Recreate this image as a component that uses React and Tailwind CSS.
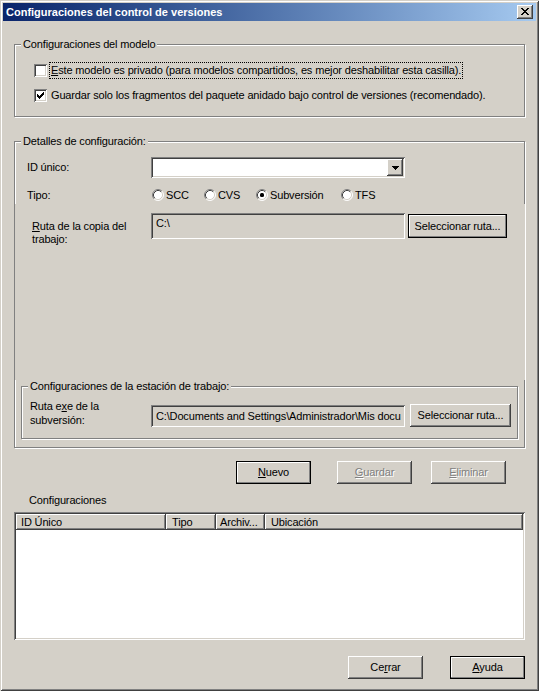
import React from "react";

const RAISED =
  "shadow-[inset_-1px_-1px_0_#404040,inset_1px_1px_0_#ffffff,inset_-2px_-2px_0_#808080,inset_2px_2px_0_#d4d0c8]";
const SUNKEN =
  "shadow-[inset_1px_1px_0_#808080,inset_-1px_-1px_0_#ffffff,inset_2px_2px_0_#404040,inset_-2px_-2px_0_#d4d0c8]";
const ETCHED =
  "border border-[#808080] shadow-[inset_1px_1px_0_#ffffff,1px_1px_0_#ffffff]";
const DEFBTN =
  "border border-black shadow-[inset_-1px_-1px_0_#808080,inset_1px_1px_0_#ffffff]";

function GroupLabel({ children }) {
  return (
    <div className="absolute left-[6px] top-[-8px] px-[2px] bg-[#d4d0c8] leading-[14px] whitespace-nowrap">
      {children}
    </div>
  );
}

function Checkbox({ checked }) {
  return (
    <div className={`w-[13px] h-[13px] bg-white shrink-0 relative ${SUNKEN}`}>
      {checked && (
        <svg width="13" height="13" className="absolute left-0 top-0" shapeRendering="crispEdges">
          <rect x="3" y="5" width="1" height="3" fill="#000" />
          <rect x="4" y="6" width="1" height="3" fill="#000" />
          <rect x="5" y="7" width="1" height="3" fill="#000" />
          <rect x="6" y="6" width="1" height="3" fill="#000" />
          <rect x="7" y="5" width="1" height="3" fill="#000" />
          <rect x="8" y="4" width="1" height="3" fill="#000" />
          <rect x="9" y="3" width="1" height="3" fill="#000" />
        </svg>
      )}
    </div>
  );
}

function Radio({ checked }) {
  return (
    <svg width="12" height="12" viewBox="0 0 12 12" className="shrink-0">
      <circle cx="6" cy="6" r="5" fill="#ffffff" />
      <path d="M2.11 9.89 A5.5 5.5 0 0 1 9.89 2.11" stroke="#808080" strokeWidth="1" fill="none" />
      <path d="M9.89 2.11 A5.5 5.5 0 0 1 2.11 9.89" stroke="#ffffff" strokeWidth="1" fill="none" />
      <path d="M2.82 9.18 A4.5 4.5 0 0 1 9.18 2.82" stroke="#404040" strokeWidth="1" fill="none" />
      <path d="M9.18 2.82 A4.5 4.5 0 0 1 2.82 9.18" stroke="#d4d0c8" strokeWidth="1" fill="none" />
      {checked && <rect x="4" y="4" width="4" height="4" rx="1.5" fill="#000" />}
    </svg>
  );
}

function RadioItem({ label, checked, w }) {
  return (
    <div className={`flex items-center gap-[2px] ${w}`}>
      <Radio checked={checked} />
      <span className="leading-[13px]">{label}</span>
    </div>
  );
}

export default function App() {
  return (
    <div className="w-[539px] h-[691px] bg-[#d4d0c8] p-[3px] flex flex-col font-['Liberation_Sans',Arial,sans-serif] text-[11px] tracking-[-0.15px] text-black shadow-[inset_1px_1px_0_#d4d0c8,inset_-1px_-1px_0_#404040,inset_2px_2px_0_#ffffff,inset_-2px_-2px_0_#808080] overflow-hidden">
      {/* Title bar */}
      <div className="h-[18px] bg-gradient-to-r from-[#0a246a] to-[#a6caf0] flex items-center justify-between pl-[3px] pr-[3px] shrink-0">
        <span className="text-white font-bold tracking-normal leading-[14px]">
          Configuraciones del control de versiones
        </span>
        <div className={`w-[16px] h-[14px] bg-[#d4d0c8] flex items-center justify-center ${RAISED}`}>
          <svg width="8" height="7" viewBox="0 0 8 7" shapeRendering="crispEdges" className="-mt-[1px]">
            <path d="M0 0h2v1h-2z M6 0h2v1h-2z M1 1h2v1h-2z M5 1h2v1h-2z M2 2h4v1h-4z M3 3h2v1h-2z M2 4h4v1h-4z M1 5h2v1h-2z M5 5h2v1h-2z M0 6h2v1h-2z M6 6h2v1h-2z" fill="#000" />
          </svg>
        </div>
      </div>

      {/* Body */}
      <div className="flex flex-col px-[11px]">
        {/* Group 1 */}
        <div className={`relative mt-[23px] h-[73px] w-[511px] ${ETCHED}`}>
          <GroupLabel>Configuraciones del modelo</GroupLabel>
          <div className="flex flex-col pt-[19px] pl-[19px] gap-[12px]">
            <div className="flex items-center h-[13px] gap-[2px]">
              <Checkbox />
              <span className="border border-dotted border-black px-[1px] leading-[15px] whitespace-nowrap">
                <span className="underline">E</span>ste modelo es privado (para modelos compartidos, es mejor deshabilitar esta casilla).
              </span>
            </div>
            <div className="flex items-center h-[13px] gap-[2px]">
              <Checkbox checked />
              <span className="border border-transparent px-[1px] leading-[15px] whitespace-nowrap">
                Guardar solo los fragmentos del paquete anidado bajo control de versiones (recomendado).
              </span>
            </div>
          </div>
        </div>

        {/* Group 2 */}
        <div className={`relative mt-[24px] h-[307px] w-[511px] ${ETCHED} flex flex-col`}>
          <GroupLabel>Detalles de configuración:</GroupLabel>

          <div className="flex items-center mt-[15px] h-[21px] pl-[12px]">
            <span className="w-[124px]">ID único:</span>
            <div className={`w-[254px] h-[21px] bg-white p-[2px] flex justify-end ${SUNKEN}`}>
              <div className={`w-[16px] h-[17px] bg-[#d4d0c8] flex items-center justify-center ${RAISED}`}>
                <svg width="7" height="4" viewBox="0 0 7 4" shapeRendering="crispEdges">
                  <path d="M0 0h7v1h-7z M1 1h5v1h-5z M2 2h3v1h-3z M3 3h1v1h-1z" fill="#000" />
                </svg>
              </div>
            </div>
          </div>

          <div className="flex items-center mt-[11px] h-[12px] pl-[12px]">
            <span className="w-[125px]">Tipo:</span>
            <RadioItem label="SCC" w="w-[52px]" />
            <RadioItem label="CVS" w="w-[52px]" />
            <RadioItem label="Subversión" checked w="w-[85px]" />
            <RadioItem label="TFS" w="w-[50px]" />
          </div>

          {/* Panel overlaying the group border */}
          <div className="mt-[3px] h-[176px] -mr-[1px] bg-[#d4d0c8] flex items-start pl-[17px]">
            <div className="w-[119px] mt-[16px] leading-[13px]">
              <span className="underline">R</span>uta de la copia del
              <br />
              trabajo:
            </div>
            <div className={`w-[254px] h-[26px] mt-[9px] bg-[#d4d0c8] pl-[5px] pt-[4px] leading-[13px] ${SUNKEN}`}>
              C:\
            </div>
            <div className={`ml-[3px] mt-[10px] w-[99px] h-[24px] bg-[#d4d0c8] flex items-center justify-center ${DEFBTN}`}>
              Seleccionar ruta...
            </div>
          </div>

          {/* Nested group */}
          <div className={`relative mt-[6px] ml-[6px] h-[53px] w-[497px] ${ETCHED} flex items-start`}>
            <GroupLabel>Configuraciones de la estación de trabajo:</GroupLabel>
            <div className="ml-[8px] mt-[12px] w-[121px] leading-[14px]">
              Ruta e<span className="underline">x</span>e de la
              <br />
              subversión:
            </div>
            <div className={`mt-[18px] w-[254px] h-[22px] bg-[#d4d0c8] pl-[5px] flex items-center overflow-hidden whitespace-nowrap ${SUNKEN}`}>
              C:\Documents and Settings\Administrador\Mis docu
            </div>
            <div className={`ml-[5px] mt-[17px] w-[101px] h-[23px] bg-[#d4d0c8] flex items-center justify-center ${RAISED}`}>
              Seleccionar ruta...
            </div>
          </div>
        </div>

        {/* Action buttons */}
        <div className="flex mt-[13px] ml-[222px] h-[23px]">
          <div className={`w-[75px] h-[23px] bg-[#d4d0c8] flex items-center justify-center ${DEFBTN}`}>
            <span><span className="underline">N</span>uevo</span>
          </div>
          <div className={`ml-[26px] w-[75px] h-[23px] bg-[#d4d0c8] flex items-center justify-center text-[#808080] [text-shadow:1px_1px_0_#ffffff] ${RAISED}`}>
            <span><span className="underline">G</span>uardar</span>
          </div>
          <div className={`ml-[19px] w-[75px] h-[23px] bg-[#d4d0c8] flex items-center justify-center text-[#808080] [text-shadow:1px_1px_0_#ffffff] ${RAISED}`}>
            <span><span className="underline">E</span>liminar</span>
          </div>
        </div>

        <div className="mt-[9px] pl-[15px] leading-[14px]">Configuraciones</div>

        {/* List view */}
        <div className={`mt-[5px] w-[511px] h-[128px] bg-white p-[2px] flex flex-col ${SUNKEN}`}>
          <div className="flex h-[16px]">
            <div className={`w-[150px] bg-[#d4d0c8] pl-[5px] flex items-center ${RAISED}`}>ID Único</div>
            <div className={`w-[50px] bg-[#d4d0c8] pl-[6px] flex items-center ${RAISED}`}>Tipo</div>
            <div className={`w-[49px] bg-[#d4d0c8] pl-[4px] flex items-center whitespace-nowrap ${RAISED}`}>Archiv...</div>
            <div className={`flex-1 bg-[#d4d0c8] pl-[6px] flex items-center ${RAISED}`}>Ubicación</div>
          </div>
        </div>

        {/* Bottom buttons */}
        <div className="flex justify-end gap-[27px] mt-[16px]">
          <div className={`w-[75px] h-[23px] bg-[#d4d0c8] flex items-center justify-center ${RAISED}`}>
            <span>Ce<span className="underline">r</span>rar</span>
          </div>
          <div className={`w-[75px] h-[23px] bg-[#d4d0c8] flex items-center justify-center ${DEFBTN}`}>
            <span><span className="underline">A</span>yuda</span>
          </div>
        </div>
      </div>
    </div>
  );
}
